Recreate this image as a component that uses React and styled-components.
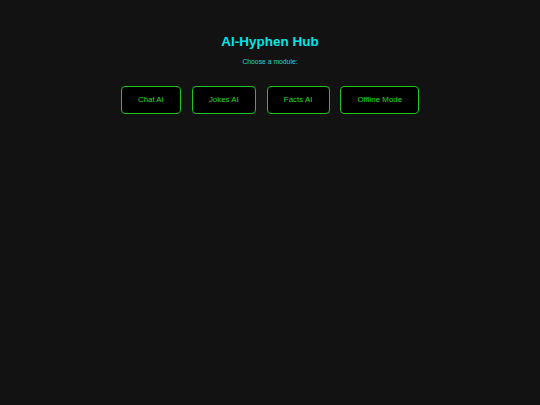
import styled, { createGlobalStyle } from 'styled-components';

const GlobalStyle = createGlobalStyle`
	html, body {
		margin: 0;
		padding: 0;
		background: #121212;
		font-family: 'Liberation Sans', Arial, sans-serif;
	}
`;

const Page = styled.div`
	min-height: 405px;
	display: flex;
	flex-direction: column;
	align-items: center;
	padding-top: 34.5px;
	box-sizing: border-box;
`;

const Title = styled.h1`
	margin: 0;
	font-size: 13.5px;
	line-height: 13.5px;
	font-weight: bold;
	color: #00e6e6;
`;

const Subtitle = styled.p`
	margin: 9.5px 0 0;
	font-size: 6.8px;
	line-height: 8px;
	color: #1fd6d6;
`;

const Modules = styled.div`
	display: flex;
	gap: 10.5px;
	margin-top: 20.5px;
`;

const ModuleButton = styled.button`
	height: 27.5px;
	padding: 0 16.3px;
	background: #000;
	border: 1.25px solid #1fc41f;
	border-radius: 4px;
	color: #22dd22;
	font-family: 'Liberation Sans', Arial, sans-serif;
	font-size: 7.9px;
	cursor: pointer;
	box-sizing: border-box;
	&:hover {
		background: #0a1a0a;
	}
`;

const modules = ['Chat AI', 'Jokes AI', 'Facts AI', 'Offline Mode'];

export default function App() {
	return (
		<>
			<GlobalStyle />
			<Page>
				<Title>AI-Hyphen Hub</Title>
				<Subtitle>Choose a module:</Subtitle>
				<Modules>
					{modules.map((name) => (
						<ModuleButton key={name}>{name}</ModuleButton>
					))}
				</Modules>
			</Page>
		</>
	);
}
